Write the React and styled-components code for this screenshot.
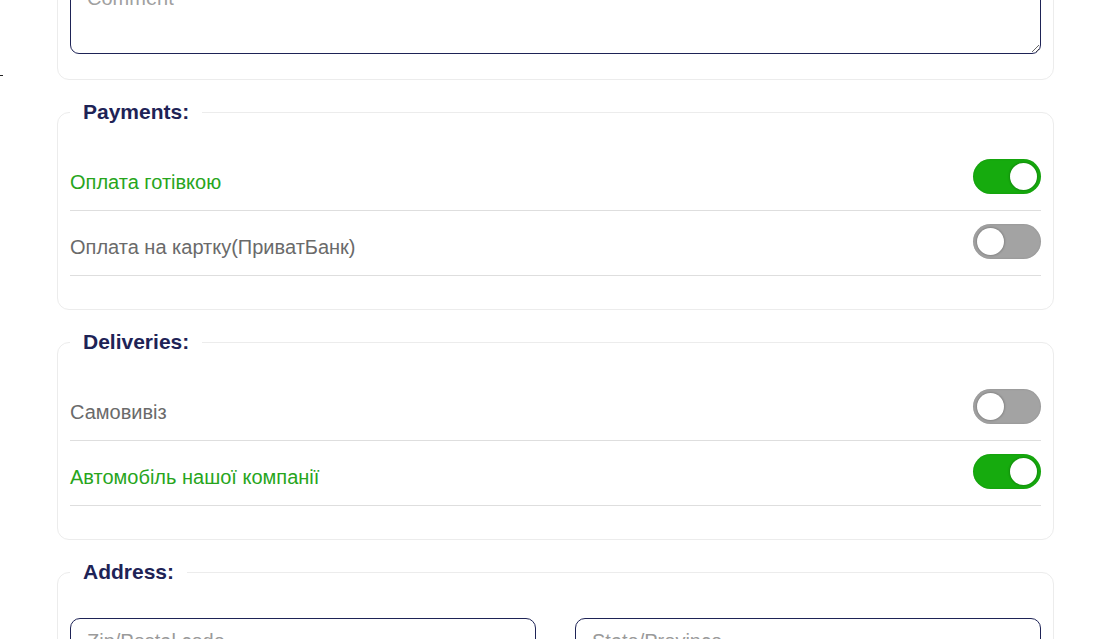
import React, { useState } from 'react';
import styled, { createGlobalStyle } from 'styled-components';

const GlobalStyle = createGlobalStyle`
  html, body {
    margin: 0;
    padding: 0;
    background: #fff;
    overflow: hidden;
  }
  body {
    font-family: "Liberation Sans", Arial, sans-serif;
  }
`;

const Page = styled.div`
  position: relative;
  width: 997px;
  margin: -51px 0 0 57px;
`;

const EdgeMark = styled.span`
  position: absolute;
  left: -57px;
  top: 126px;
  width: 3px;
  height: 1px;
  background: #222;
`;

const Section = styled.fieldset`
  margin: 0 0 21px;
  padding: ${p => (p.$bare ? '20px 12px 25px' : '23px 12px 33px')};
  border: 1px solid #ececec;
  border-radius: 12px;
  min-width: 0;
`;

const Legend = styled.legend`
  padding: 0 13px;
  font-size: 21px;
  font-weight: 700;
  line-height: 22px;
  color: #1e2356;
`;

const Comment = styled.textarea`
  display: block;
  box-sizing: border-box;
  width: 100%;
  height: 84px;
  padding: 15px 16px 11px;
  border: 1px solid #1e2356;
  border-radius: 9px;
  font-family: inherit;
  font-size: 20px;
  line-height: 24px;
  color: #333;
  resize: vertical;
  &::placeholder { color: #a0a0a0; }
`;

const Row = styled.div`
  display: flex;
  justify-content: space-between;
  align-items: center;
  padding: 13px 0 16px;
  border-bottom: 1px solid #dedede;
`;

const Label = styled.span`
  padding-top: 11px;
  font-size: 20px;
  line-height: 22px;
  color: ${p => (p.$on ? '#27a51c' : '#6a6a6a')};
`;

const Track = styled.button`
  position: relative;
  width: 68px;
  height: 35px;
  padding: 0;
  border: none;
  border-radius: 18px;
  background: ${p => (p.$on ? '#16ab0e' : '#a3a3a3')};
  cursor: pointer;
  box-shadow: inset 0 0 2px rgba(0, 0, 0, 0.15);
`;

const Knob = styled.span`
  position: absolute;
  top: 4px;
  left: ${p => (p.$on ? '37px' : '4px')};
  width: 27px;
  height: 27px;
  border-radius: 50%;
  background: #fff;
  box-shadow: 0 0 2px 1px rgba(0, 0, 0, 0.18);
  transition: left 0.2s;
`;

const Fields = styled.div`
  display: grid;
  grid-template-columns: 1fr 1fr;
  gap: 39px;
  padding-top: 12px;
`;

const Input = styled.input`
  box-sizing: border-box;
  width: 100%;
  padding: 10px 16px 14px;
  border: 1px solid #1e2356;
  border-radius: 10px;
  font-family: inherit;
  font-size: 20px;
  line-height: 24px;
  color: #333;
  &::placeholder { color: #9a9a9a; }
`;

function Toggle({ on, onChange }) {
  return (
    <Track $on={on} onClick={onChange} type="button">
      <Knob $on={on} />
    </Track>
  );
}

function OptionList({ items, setItems }) {
  return items.map((it, i) => (
    <Row key={it.name}>
      <Label $on={it.on}>{it.name}</Label>
      <Toggle
        on={it.on}
        onChange={() => setItems(items.map((x, j) => (j === i ? { ...x, on: !x.on } : x)))}
      />
    </Row>
  ));
}

export default function App() {
  const [payments, setPayments] = useState([
    { name: 'Оплата готівкою', on: true },
    { name: 'Оплата на картку(ПриватБанк)', on: false },
  ]);
  const [deliveries, setDeliveries] = useState([
    { name: 'Самовивіз', on: false },
    { name: 'Автомобіль нашої компанії', on: true },
  ]);

  return (
    <>
      <GlobalStyle />
      <Page>
        <EdgeMark />
        <Section $bare>
          <Comment placeholder="Comment" />
        </Section>
        <Section>
          <Legend>Payments:</Legend>
          <OptionList items={payments} setItems={setPayments} />
        </Section>
        <Section>
          <Legend>Deliveries:</Legend>
          <OptionList items={deliveries} setItems={setDeliveries} />
        </Section>
        <Section>
          <Legend>Address:</Legend>
          <Fields>
            <Input placeholder="Zip/Postal code" />
            <Input placeholder="State/Province" />
          </Fields>
        </Section>
      </Page>
    </>
  );
}
